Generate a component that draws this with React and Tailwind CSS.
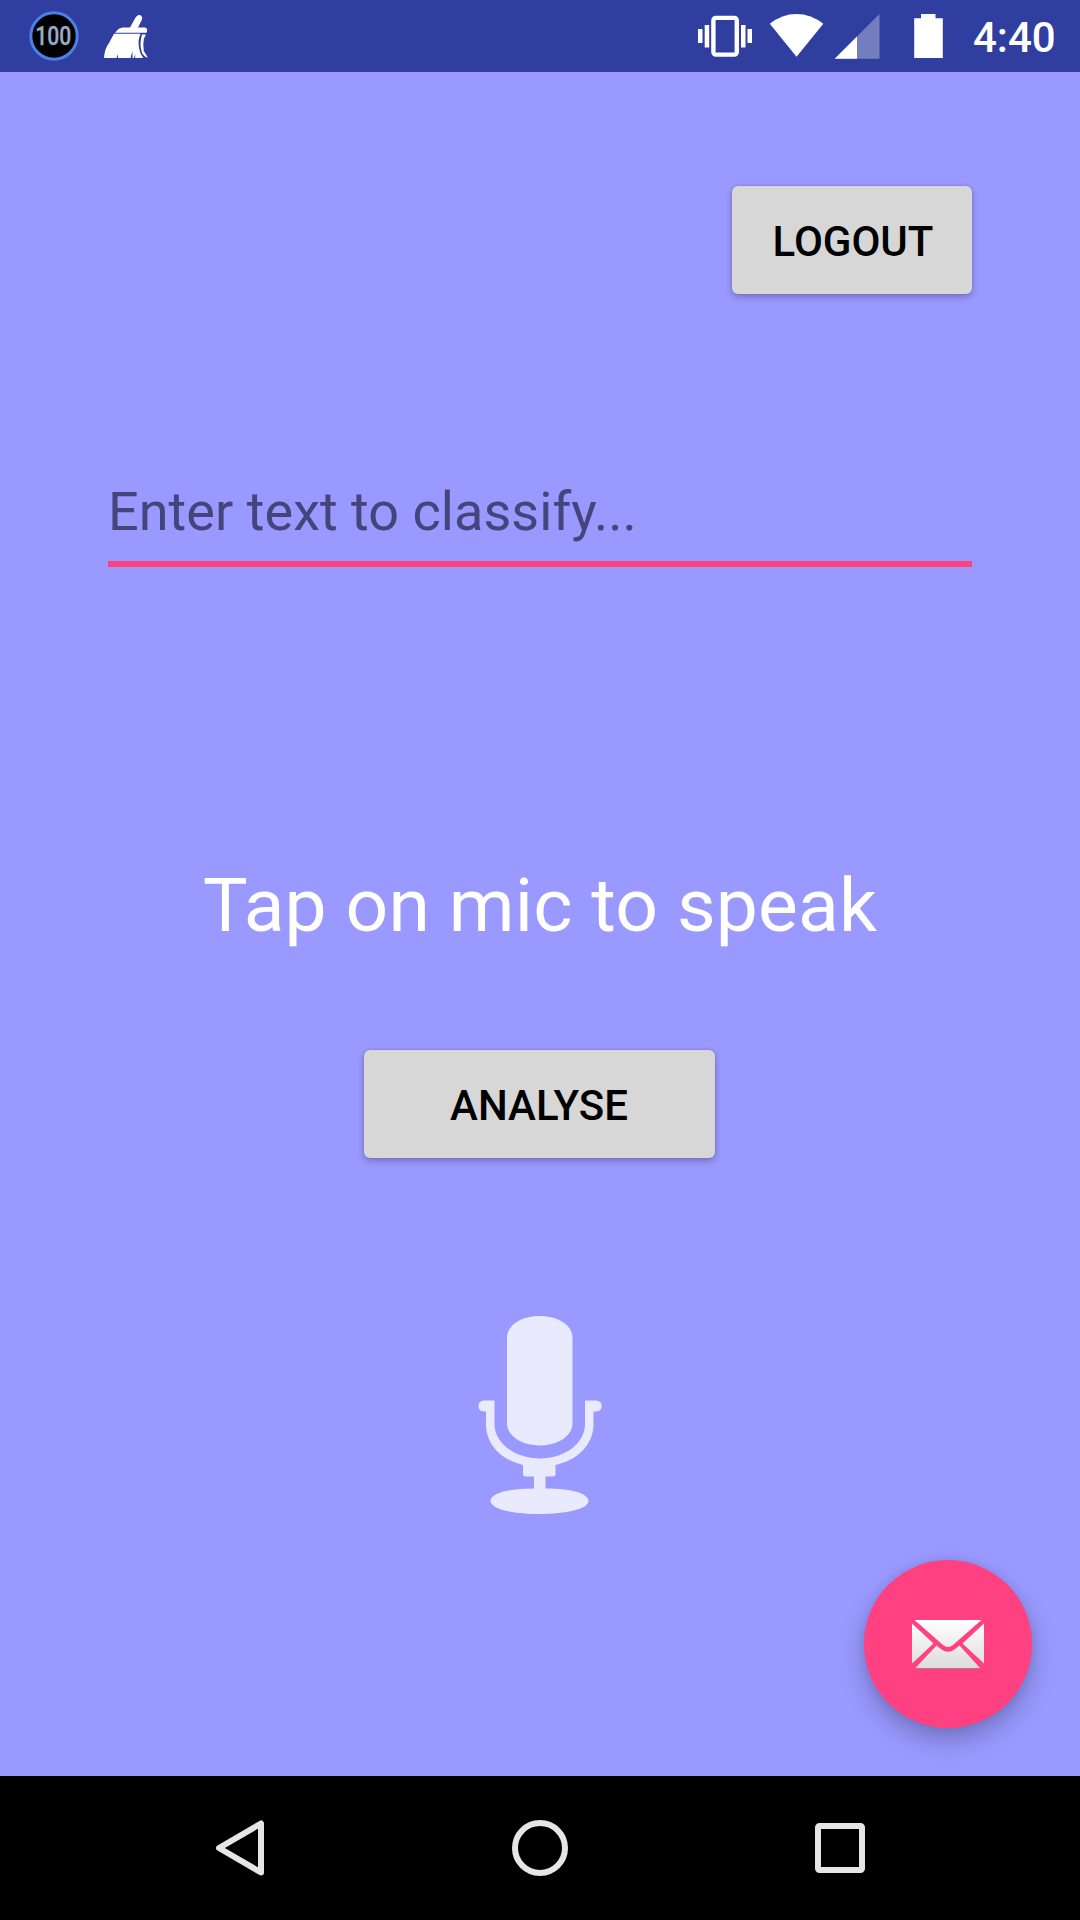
function StatusBar() {
  return (
    <header className="flex h-[72px] shrink-0 items-center bg-[#303f9f] text-white">
      <svg className="ml-[28px] h-[72px] w-[52px]" viewBox="28 0 52 72">
        <circle cx="54" cy="36" r="23.2" fill="#000" stroke="#4a80e8" strokeWidth="3" />
        <text x="53.2" y="45.3" textAnchor="middle" fontFamily="Roboto, sans-serif" fontSize="25.5" fontWeight="500" textLength="36" lengthAdjust="spacingAndGlyphs" fill="#98acc8" stroke="#98acc8" strokeWidth="0.3">100</text>
      </svg>
      <svg className="ml-[20px] h-[72px] w-[52px]" viewBox="100 0 52 72" fill="#fff">
        <path d="M130 27.5 135 18.5Q137 14.5 140 15Q143.500 16.500 141.500 20.500L138 27.500H145Q147.500 28 147 31.500L146.500 32.700H115L118.500 29Q120.500 27.500 123 27.500Z" />
        <path d="M114 33.700H140.500Q137.800 40 138.800 46Q139.500 53 143.300 58H135.200V54L134 58H132.500V51L130.500 58H118V54L116.500 58H104Q104.500 49 109 43Z" />
        <path d="M142 34.500H146L143.800 39Q142.800 45 143.800 51L147.800 57.500Q145 57.500 142 53Q139 44 142 34.500Z" />
      </svg>
      <svg className="ml-[544px] h-[72px] w-[58px]" viewBox="696 0 58 72" fill="#fff">
        <rect x="713.4" y="17.900" width="23.400" height="36.700" rx="2.500" fill="none" stroke="#fff" strokeWidth="4.400" />
        <path d="M698 29h4.500v14H698zM704.700 25h4.500v22.500h-4.500zM741 25h4.500v22.500H741zM747.500 29h4.500v14h-4.500z" />
      </svg>
      <svg className="ml-[14px] h-[72px] w-[57px]" viewBox="768 0 57 72" fill="#fff">
        <path d="M769.800 23.800Q782 14 796.500 14T823.300 23.800L796.500 56.700Z" />
      </svg>
      <svg className="ml-[8px] h-[72px] w-[48px]" viewBox="833 0 48 72" fill="#fff">
        <path d="M879.500 14V58.800H834.700Z" opacity=".33" />
        <path d="M857 36.500V58.800H834.700Z" />
      </svg>
      <svg className="ml-[31px] h-[72px] w-[33px]" viewBox="912 0 33 72" fill="#fff">
        <path d="M921 14H935.500V18.200H942.800V57.900H914.200V18.200H921Z" />
      </svg>
      <time className="ml-[28px] pt-[4px] text-[42px] leading-none font-medium">4:40</time>
    </header>
  );
}

function Button({ children, className }) {
  return (
    <button className={`h-[108px] rounded-[6px] bg-[#d7d7d7] pt-[3px] text-[42px] leading-none font-medium text-black shadow-[0_3px_7px_rgba(0,0,0,0.24),0_0_3px_rgba(0,0,0,0.14)] ${className}`}>
      {children}
    </button>
  );
}

function MicIcon() {
  return (
    <svg className="h-[204px] w-[130px]" viewBox="475 1312 130 204" fill="#eaeaff">
      <path d="M507 1338C507 1325 521 1316 539.500 1316S572.500 1325 572.500 1338V1423C572.500 1436 558 1445.500 539.500 1445.500S507 1436 507 1423Z" />
      <path d="M494.500 1400.500H484Q478.500 1401 478.500 1406T484 1411.500H486V1424C486 1446 503 1460.500 523 1465V1474Q523 1476.500 525.500 1476.500H534V1488.500C509 1488.500 490.500 1493 490.500 1501C490.500 1509 513 1514 539.500 1514S588.500 1509 588.500 1501C588.500 1493 570 1488.500 545.500 1488.500V1476.500H553Q555.500 1476.500 555.500 1474V1465C576 1460.500 593.500 1446 593.500 1424V1411.500H596Q601.700 1411 601.700 1406T596 1400.500H585V1424C585 1444 564 1458.500 540 1458.500S494.500 1444 494.500 1424Z" />
    </svg>
  );
}

function MailIcon() {
  return (
    <svg className="h-[52px] w-[74px]" viewBox="911 1618 74 52">
      <defs>
        <linearGradient id="paper" x1="0" y1="1620" x2="0" y2="1669" gradientUnits="userSpaceOnUse">
          <stop stopColor="#fff" />
          <stop offset="1" stopColor="#dcdcdc" />
        </linearGradient>
      </defs>
      <g fill="url(#paper)">
        <path d="M914.500 1620H981.500L953 1645Q948 1649 943 1645Z" />
        <path d="M912 1623.500 933.500 1643.500 912 1663.500ZM984 1623.500 962.500 1643.500 984 1663.500Z" />
        <path d="M936.500 1645.500 941.500 1649.500Q948 1654 954.500 1649.500L959.500 1645.500 980.500 1668.500H915Z" />
      </g>
      <path d="M915 1668.500H980.500" stroke="#b77" strokeWidth="1" />
    </svg>
  );
}

function NavBar() {
  return (
    <nav className="flex h-[144px] shrink-0 items-center justify-center gap-[240px] bg-black">
      <svg className="h-[60px] w-[60px]" viewBox="0 0 60 60" fill="none" stroke="#e6e6e6" strokeWidth="6" strokeLinejoin="round">
        <path d="M51 5.500V54.500L9 30Z" />
      </svg>
      <svg className="h-[60px] w-[60px]" viewBox="0 0 60 60" fill="none" stroke="#e6e6e6" strokeWidth="6">
        <circle cx="30" cy="30" r="25" />
      </svg>
      <svg className="h-[60px] w-[60px]" viewBox="0 0 60 60" fill="none" stroke="#e6e6e6" strokeWidth="6">
        <rect x="8" y="8" width="44" height="44" rx="1.500" />
      </svg>
    </nav>
  );
}

export default function App() {
  return (
    <div className="flex h-[1920px] w-[1080px] flex-col overflow-hidden bg-[#9999ff] font-['Roboto',sans-serif]">
      <StatusBar />
      <main className="flex min-h-0 flex-1 flex-col items-center">
        <Button className="mt-[114px] mr-[108px] w-[240px] self-end pl-[2px]">LOGOUT</Button>
        <input
          className="mt-[176px] h-[97px] w-[864px] border-b-[6px] border-[#ff4081] bg-transparent pb-[8px] text-[54px] tracking-[0.04px] text-black outline-none placeholder:text-[#45447c] placeholder:opacity-100"
          placeholder="Enter text to classify..."
        />
        <p className="mt-[294px] text-[75px] leading-[88px] tracking-[0.15px] whitespace-nowrap text-white">Tap on mic to speak</p>
        <Button className="mt-[101px] mr-px w-[351px] pr-px">ANALYSE</Button>
        <button className="mt-[154px]" aria-label="Speak">
          <MicIcon />
        </button>
        <button
          className="mt-[44px] mr-[48px] flex h-[168px] w-[168px] shrink-0 items-center justify-center self-end rounded-full bg-[#ff4081] shadow-[0_12px_24px_rgba(0,0,0,0.24),0_0_8px_rgba(0,0,0,0.08)]"
          aria-label="Mail"
        >
          <MailIcon />
        </button>
      </main>
      <NavBar />
    </div>
  );
}
